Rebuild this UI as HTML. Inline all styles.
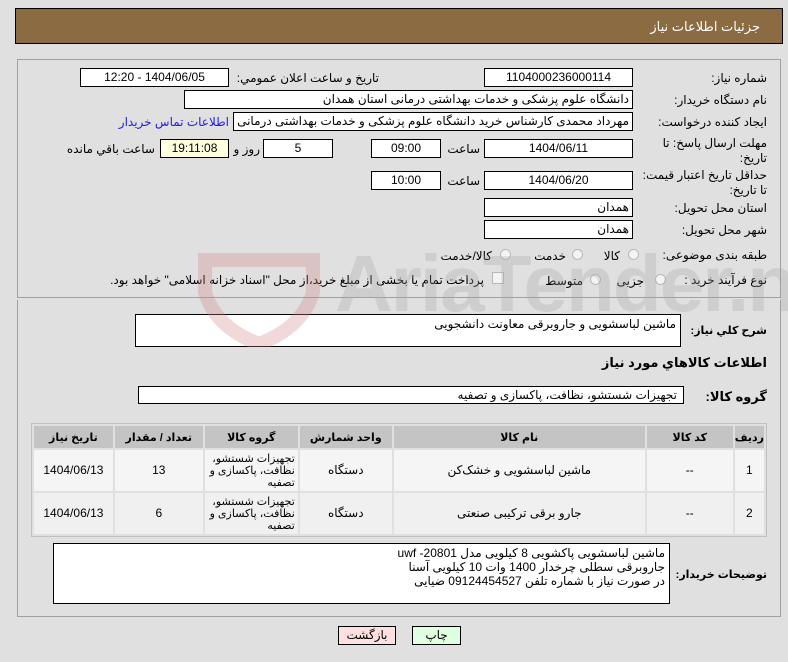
<!DOCTYPE html>
<html><head><meta charset="utf-8"><style>
*{box-sizing:border-box;margin:0;padding:0}
body{width:788px;height:662px;background:#e0e0e0;font-family:"Liberation Sans","DejaVu Sans",sans-serif;font-size:12px;color:#000;position:relative;overflow:hidden;direction:rtl}
.a{position:absolute;white-space:nowrap}
.hdr{left:15px;top:8px;width:768px;height:36px;background:#8b6b42;border:1px solid #000;color:#fff;font-size:13px;padding:10px 22px 0 0;text-align:right}
.panel{border:1px solid #a0a0a0}
.in{position:absolute;background:#fff;border:1px solid #000;height:19px;line-height:17px;text-align:center;font-size:12px}
.lb{position:absolute;white-space:nowrap;text-align:right;font-size:12px}
.r{right:21px}
table{position:absolute;left:31px;top:423px;width:736px;border-collapse:separate;border-spacing:2px;background:#e0e0e0;border:1px solid #c0c0c0}
th{background:#c4c4c4;height:22px;font-weight:bold;font-size:11px}
td{background:#f5f5f5;height:41px;text-align:center;font-size:12px;line-height:13px}
tr.e td{background:#f0f0f0}
.ta{position:absolute;background:#fff;border:1px solid #000;text-align:right;padding:2px 4px;font-size:12px;line-height:14px}
.rad{position:absolute;width:11px;height:11px;border-radius:50%;border:1px solid #b8b8b8;background:#f4f4f4}
.btn{position:absolute;height:19px;border:1px solid #000;text-align:center;line-height:17px;font-size:12px}
.wm{z-index:5;pointer-events:none}
</style></head><body>
<div class="a hdr">جزئیات اطلاعات نیاز</div>
<div class="a panel" style="left:17px;top:59px;width:764px;height:239px"></div>
<div class="a panel" style="left:17px;top:300px;width:764px;height:317px;border-top:none"></div>

<div class="lb r" style="top:71px">شماره نیاز:</div>
<div class="in" style="left:484px;top:68px;width:149px">1104000236000114</div>
<div class="lb" style="right:409px;top:71px">تاریخ و ساعت اعلان عمومي:</div>
<div class="in" style="left:80px;top:68px;width:149px">1404/06/05 - 12:20</div>

<div class="lb r" style="top:93px">نام دستگاه خریدار:</div>
<div class="in" style="left:184px;top:90px;width:449px;text-align:right;padding-right:3px">دانشگاه علوم پزشکی و خدمات بهداشتی درمانی استان همدان</div>

<div class="lb r" style="top:115px">ایجاد کننده درخواست:</div>
<div class="in" style="left:233px;top:112px;width:400px;text-align:right;padding-right:3px;overflow:hidden">مهرداد محمدی کارشناس خرید دانشگاه علوم پزشکی و خدمات بهداشتی درمانی</div>
<div class="lb" style="right:559px;top:115px;color:#2020e0">اطلاعات تماس خریدار</div>

<div class="lb r" style="top:136px;line-height:15px">مهلت ارسال پاسخ: تا<br>تاریخ:</div>
<div class="in" style="left:484px;top:139px;width:149px">1404/06/11</div>
<div class="lb" style="right:308px;top:142px">ساعت</div>
<div class="in" style="left:371px;top:139px;width:70px">09:00</div>
<div class="in" style="left:263px;top:139px;width:70px">5</div>
<div class="lb" style="right:528px;top:142px">روز و</div>
<div class="in" style="left:160px;top:139px;width:69px;background:#ffffe0">19:11:08</div>
<div class="lb" style="right:633px;top:142px">ساعت باقي مانده</div>

<div class="lb r" style="top:168px;line-height:15px">حداقل تاریخ اعتبار قیمت:<br>تا تاریخ:</div>
<div class="in" style="left:484px;top:171px;width:149px">1404/06/20</div>
<div class="lb" style="right:308px;top:174px">ساعت</div>
<div class="in" style="left:371px;top:171px;width:70px">10:00</div>

<div class="lb r" style="top:201px">استان محل تحویل:</div>
<div class="in" style="left:484px;top:198px;width:149px;text-align:right;padding-right:3px">همدان</div>
<div class="lb r" style="top:223px">شهر محل تحویل:</div>
<div class="in" style="left:484px;top:220px;width:149px;text-align:right;padding-right:3px">همدان</div>

<div class="lb r" style="top:248px">طبقه بندی موضوعی:</div>
<div class="rad" style="left:628px;top:249px"></div>
<div class="lb" style="right:168px;top:249px">کالا</div>
<div class="rad" style="left:572px;top:249px"></div>
<div class="lb" style="right:222px;top:249px">خدمت</div>
<div class="rad" style="left:500px;top:249px"></div>
<div class="lb" style="right:296px;top:249px">کالا/خدمت</div>

<div class="lb r" style="top:273px">نوع فرآیند خرید :</div>
<div class="rad" style="left:655px;top:274px"></div>
<div class="lb" style="right:144px;top:274px">جزیی</div>
<div class="rad" style="left:590px;top:274px"></div>
<div class="lb" style="right:205px;top:274px">متوسط</div>
<div class="a" style="left:492px;top:272px;width:12px;height:12px;border:1px solid #b8b8b8;background:#f4f4f4"></div>
<div class="lb" style="right:304px;top:273px">پرداخت تمام یا بخشی از مبلغ خرید،از محل "اسناد خزانه اسلامی" خواهد بود.</div>

<div class="lb r" style="top:324px;font-weight:bold;font-size:11px">شرح کلي نیاز:</div>
<div class="ta" style="left:135px;top:314px;width:546px;height:33px">ماشین لباسشویی و جاروبرقی معاونت دانشجویی</div>
<div class="lb r" style="top:355px;font-weight:bold;font-size:13px">اطلاعات کالاهاي مورد نیاز</div>
<div class="lb r" style="top:389px;font-weight:bold;font-size:13px">گروه کالا:</div>
<div class="in" style="left:138px;top:386px;width:546px;height:18px;line-height:16px;text-align:right;padding-right:6px">تجهیزات شستشو، نظافت، پاکسازی و تصفیه</div>

<table>
<tr><th style="width:28px">ردیف</th><th style="width:86px">کد کالا</th><th style="width:251px">نام کالا</th><th style="width:92px">واحد شمارش</th><th style="width:93px">گروه کالا</th><th style="width:88px">تعداد / مقدار</th><th>تاریخ نیاز</th></tr>
<tr><td>1</td><td>--</td><td>ماشین لباسشویی و خشک‌کن</td><td>دستگاه</td><td style="text-align:right;padding-right:3px;font-size:11px;line-height:12px">تجهیزات شستشو، نظافت، پاکسازی و تصفیه</td><td>13</td><td>1404/06/13</td></tr>
<tr class="e"><td>2</td><td>--</td><td>جارو برقی ترکیبی صنعتی</td><td>دستگاه</td><td style="text-align:right;padding-right:3px;font-size:11px;line-height:12px">تجهیزات شستشو، نظافت، پاکسازی و تصفیه</td><td>6</td><td>1404/06/13</td></tr>
</table>

<div class="lb r" style="top:568px;font-weight:bold;font-size:11px">توضیحات خریدار:</div>
<div class="ta" style="left:53px;top:543px;width:617px;height:61px">ماشین لباسشویی پاکشویی 8 کیلویی مدل uwf -20801<br>جاروبرقی سطلی چرخدار 1400 وات 10 کیلویی  آسنا<br>در صورت نیاز با شماره تلفن 09124454527 ضیایی</div>

<div class="btn" style="left:338px;top:626px;width:58px;background:#ffe0e0">بازگشت</div>
<div class="btn" style="left:412px;top:626px;width:49px;background:#e0ffe0">چاپ</div>

<svg class="a wm" style="left:195px;top:252px" width="130" height="95" viewBox="0 0 130 95"><path d="M10 8 L118 8 L118 40 Q108 75 64 92 Q20 75 10 40 Z" fill="none" stroke="rgba(210,130,130,0.3)" stroke-width="14"/></svg>
<div class="a wm" style="left:335px;top:238px;font-size:80px;font-weight:bold;color:rgba(160,160,160,0.28);direction:ltr;letter-spacing:-2px">AriaTender.net</div>
</body></html>
